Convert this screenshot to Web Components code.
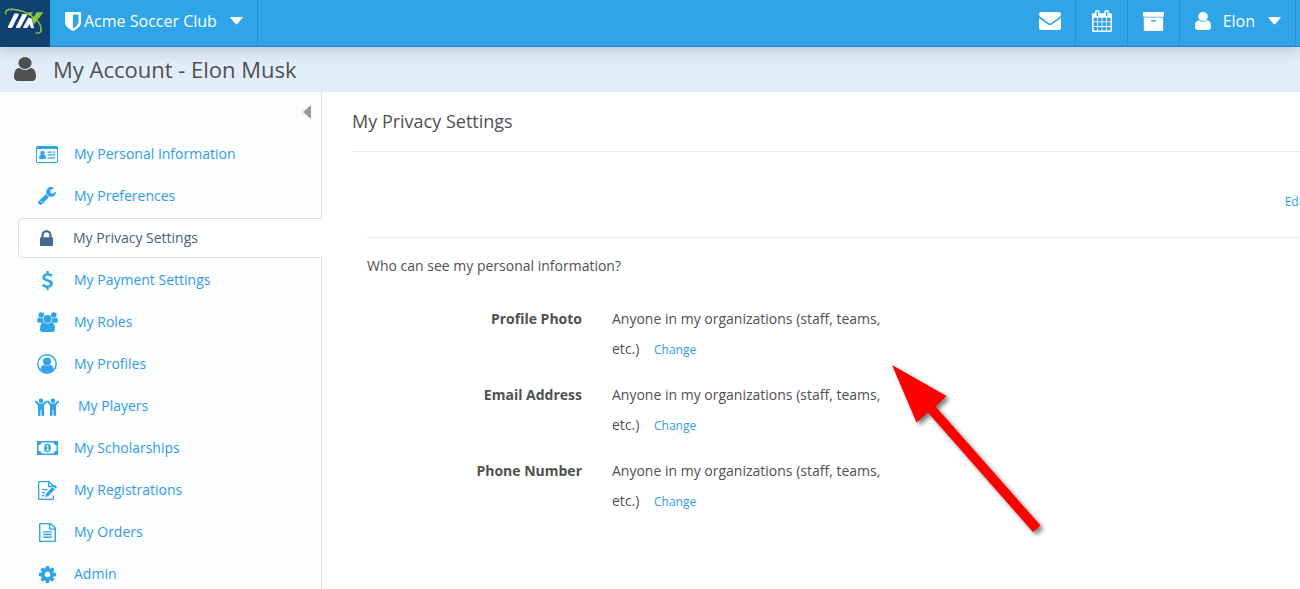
<!DOCTYPE html>
<html lang="en">
<head>
<meta charset="utf-8">
<meta name="viewport" content="width=device-width, initial-scale=1">
<title>My Account - Elon Musk</title>
<style>
  :root { --brand: #2fa4e7; --link: #2f9be6; --ink: #505050; --line: #d9dfe6; }
  html, body { margin: 0; height: 100%; }
  body { font-family: "Open Sans", sans-serif; font-size: 14px; color: var(--ink); background: #fff; overflow: hidden; }
</style>
</head>
<body>
<account-app></account-app>

<script>
const define = (name, html, setup) => {
  const template = document.createElement('template');
  template.innerHTML = html;
  customElements.define(name, class extends HTMLElement {
    constructor() {
      super();
      this.attachShadow({ mode: 'open' }).append(template.content.cloneNode(true));
    }
    connectedCallback() { if (setup) setup(this, this.shadowRoot); }
  });
};

/* Each icon: [width, height, viewBox, markup] */
const ICONS = {
  user: [16, 18, '256 128 1280 1536', '<path d="M1536 1399q0 109-62.5 187t-150.5 78h-854q-88 0-150.5-78t-62.5-187q0-85 8.5-160.5t31.5-152 58.5-131 94-89 134.5-34.5q131 128 313 128t313-128q76 0 134.5 34.5t94 89 58.5 131 31.5 152 8.5 160.5zm-256-887q0 159-112.5 271.5t-271.5 112.5-271.5-112.5-112.5-271.5 112.5-271.5 271.5-112.5 271.5 112.5 112.5 271.5z"/>'],
  envelope: [22, 18, '0 256 1792 1408', '<path d="M1792 710v794q0 66-47 113t-113 47h-1472q-66 0-113-47t-47-113v-794q44 49 101 87 362 246 497 345 57 42 92.5 65.5t94.5 48 110 24.5h2q51 0 110-24.5t94.5-48 92.5-65.5q170-123 498-345 57-39 100-87zm0-294q0 79-49 151t-122 123q-376 261-468 325-10 7-42.5 31t-54 38.5-52 32.5-57.5 27-50 9h-2q-23 0-50-9t-57.5-27-52-32.5-54-38.5-42.5-31q-91-64-262-182.5t-205-142.5q-62-42-117-115.5t-55-136.5q0-78 41.5-130t118.5-52h1472q65 0 112.5 47t47.5 113z"/>'],
  calendar: [20, 22, '64 0 1664 1792', '<path d="M192 1664h288v-288h-288v288zm352 0h320v-288h-320v288zm-352-352h288v-320h-288v320zm352 0h320v-320h-320v320zm-352-384h288v-288h-288v288zm736 736h320v-288h-320v288zm-384-736h320v-288h-320v288zm768 736h288v-288h-288v288zm-384-352h320v-320h-320v320zm-352-864v-288q0-13-9.5-22.5t-22.5-9.5h-64q-13 0-22.5 9.5t-9.5 22.5v288q0 13 9.5 22.5t22.5 9.5h64q13 0 22.5-9.5t9.5-22.5zm736 864h288v-320h-288v320zm-384-384h320v-288h-320v288zm384 0h288v-288h-288v288zm32-480v-288q0-13-9.5-22.5t-22.5-9.5h-64q-13 0-22.5 9.5t-9.5 22.5v288q0 13 9.5 22.5t22.5 9.5h64q13 0 22.5-9.5t9.5-22.5zm384-64v1280q0 52-38 90t-90 38h-1408q-52 0-90-38t-38-90v-1280q0-52 38-90t90-38h128v-96q0-66 47-113t113-47h64q66 0 113 47t47 113v96h384v-96q0-66 47-113t113-47h64q66 0 113 47t47 113v96h128q52 0 90 38t38 90z"/>'],
  archive: [21, 19, '64 128 1664 1536', '<path d="M1088 832q0-26-19-45t-45-19h-256q-26 0-45 19t-19 45 19 45 45 19h256q26 0 45-19t19-45zm576-192v960q0 26-19 45t-45 19h-1408q-26 0-45-19t-19-45v-960q0-26 19-45t45-19h1408q26 0 45 19t19 45zm64-448v256q0 26-19 45t-45 19h-1536q-26 0-45-19t-19-45v-256q0-26 19-45t45-19h1536q26 0 45 19t19 45z"/>'],
  shield: [16, 19, '256 128 1280 1536', '<path d="M1344 960v-640h-448v1137q119-63 213-137 235-184 235-360zm192-768v768q0 86-33.5 170.5t-83 150-118 127.5-126.5 103-121 77.5-89.5 49.5-42.5 20q-12 6-26 6t-26-6q-16-7-42.5-20t-89.5-49.5-121-77.5-126.5-103-118-127.5-83-150-33.5-170.5v-768q0-26 19-45t45-19h1152q26 0 45 19t19 45z"/>'],
  caret: [13, 8, '0 0 13 8', '<path d="M1 0h11q1.300 0 .5 1L7.300 7q-.8.900-1.600 0L.5 1Q-.3 0 1 0z"/>'],
  collapse: [8, 14, '0 0 8 14', '<path d="M8 0v14L0 7z"/>'],
  card: [22, 17, '0 0 22 17', '<path fill-rule="evenodd" d="M1.500 0h19Q22 0 22 1.500v14q0 1.500-1.500 1.500h-19Q0 17 0 15.500v-14Q0 0 1.500 0zM1 3v12.500q0 .5.5.5h19q.5 0 .5-.5V3z"/><circle cx="6.500" cy="7" r="2.200"/><path d="M3.200 13V11q0-2.500 2-2.500 1.300 1 2.600 0 2 0 2 2.500v2zM11.500 5.500h4v1.300h-4zM16.800 5.500h2.400v1.300h-2.400zM11.500 8.200h7.700v1.200h-7.700zM11.500 11.200h7.700v1.200h-7.700z"/>'],
  wrench: [18, 18, '85 128 1641 1643', '<path d="M448 1472q0-26-19-45t-45-19-45 19-19 45 19 45 45 19 45-19 19-45zm644-420l-682 682q-37 37-90 37-52 0-91-37l-106-108q-38-36-38-90 0-53 38-91l681-681q39 98 114.500 173.500t173.500 114.500zm634-435q0 39-23 106-47 134-164.500 217.500t-258.500 83.500q-185 0-316.500-131.500t-131.500-316.500 131.500-316.500 316.500-131.500q58 0 121.500 16.500t107.500 46.500q16 11 16 28t-16 28l-293 169v224l193 107q5-3 79-48.500t135.500-81 70.500-35.500q15 0 23.500 10t8.500 25z"/>'],
  lock: [13, 16, '320 128 1152 1408', '<path d="M640 768h512v-192q0-106-75-181t-181-75-181 75-75 181v192zm832 96v576q0 40-28 68t-68 28h-960q-40 0-68-28t-28-68v-576q0-40 28-68t68-28h32v-192q0-184 132-316t316-132 316 132 132 316v192h32q40 0 68 28t28 68z"/>'],
  dollar: [11, 19, '430 0 935 1792', '<path d="M1362 1185q0 153-99.500 263.500t-258.500 136.500v175q0 14-9 23t-23 9h-135q-13 0-22.500-9.500t-9.500-22.500v-175q-66-9-127.500-31t-101.500-44.500-74-48-46.500-37.500-17.500-18q-17-21-2-41l103-135q7-10 23-12 15-2 24 9l2 2q113 99 243 125 37 8 74 8 81 0 142.500-43t61.500-122q0-28-15-53t-33.500-42-58.500-37.500-66-32-80-32.500q-39-16-61.500-25t-61.500-26.500-62.500-31-56.500-35.500-53.500-42.500-43.500-49-35.500-58-21-66.500-8.500-78q0-138 98-242t255-134v-180q0-13 9.500-22.500t22.500-9.500h135q14 0 23 9t9 23v176q57 6 110.500 23t87 33.500 63.500 37.500 39 29 15 14q17 18 5 38l-81 146q-8 15-23 16-14 3-27-7-3-3-14.500-12t-39-26.500-58.500-32-74.500-26-85.500-11.500q-95 0-155 43t-60 111q0 26 8.500 48t29.500 41.500 39.500 33 56 31 60.500 27 70 27.500q53 20 81 31.500t76 35 75.500 42.500 62 50 53 63.500 31.500 76.500 13 94z"/>'],
  users: [21, 20, '0 0 21 20', '<circle cx="4.200" cy="3" r="2.800"/><circle cx="16.800" cy="3" r="2.800"/><path d="M.2 9.500Q0 5.500 1.800 5.500q2.400 1.700 4.300.6-.7 2.500.9 4.700H2Q.2 10.800.2 9.500zM20.800 9.500q.2-4-1.600-4-2.400 1.700-4.300.6.7 2.500-.9 4.700h5q1.800 0 1.800-1.300z"/><circle cx="10.500" cy="7" r="4"/><path d="M3 17q0-6.500 4-6.500 3.500 2.300 7 0 4 0 4 6.500 0 3-2.600 3H5.600Q3 20 3 17z"/>'],
  profile: [20, 20, '0 0 20 20', '<circle cx="10" cy="10" r="9.200" fill="none" stroke="currentColor" stroke-width="1.400"/><circle cx="10" cy="7.600" r="4"/><path d="M3.300 16q.5-5 3.700-5 3 2 6 0 3.200 0 3.700 5Q14 18.700 10 18.700T3.300 16z"/>'],
  players: [24, 20, '0 -2 24 20', '<g><circle cx="6" cy="2.700" r="2.300"/><path d="M.2 2.900q.7-.8 1.400 0L4.300 5.500h3.400l2.700-2.600q.7-.6 1.400 0 .6.700 0 1.300L9 7.500V17.200q0 .8-1.200.8t-1.300-.8V12h-1v5.200q0 .8-1.300.8T3 17.200V7.500L.2 4.200q-.5-.6 0-1.300z"/></g><g transform="translate(12 0)"><circle cx="6" cy="2.700" r="2.300"/><path d="M.2 2.900q.7-.8 1.400 0L4.300 5.500h3.400l2.700-2.600q.7-.6 1.400 0 .6.700 0 1.300L9 7.500V17.200q0 .8-1.200.8t-1.300-.8V12h-1v5.200q0 .8-1.300.8T3 17.200V7.500L.2 4.200q-.5-.6 0-1.300z"/></g>'],
  money: [21, 14, '0 0 21 14', '<path fill-rule="evenodd" d="M0 0h21v14H0zM4.500 1.500Q4.300 4 1.500 4.300v5.400Q4.300 10 4.500 12.500h12q.2-2.500 3-2.800V4.300q-2.800-.3-3-2.800z"/><ellipse cx="10.500" cy="7" rx="3.500" ry="4.300"/><path fill="#fcfdff" d="M9.100 4.900 10.300 3.900h1v4.900h1.100v1H9v-1h1.200V5.300l-.7.500z"/>'],
  edit: [19, 19, '0 0 19 19', '<path fill="none" stroke="currentColor" stroke-width="1.300" d="M15.400 5.500V5L11 .7H1.300Q.7.700.7 1.300v16.400q0 .6.600.6h13.500q.6 0 .6-.6V14.500M10.600.7v4.800h4"/><path d="M16.300 4.200q.5-.5 1.100 0l1.200 1.200q.6.600 0 1.200l-1.200 1.100-2.300-2.300zM14.400 6.100l2.300 2.300-6.500 6.500-3.300 1.300 1-3.500z"/><path d="M4 8h5.500v1.200H4zM4 11h3v1.200H4zM4 14h2v1.200H4z"/>'],
  file: [17, 19, '128 0 1536 1792', '<path d="M1596 380q28 28 48 76t20 88v1152q0 40-28 68t-68 28h-1344q-40 0-68-28t-28-68v-1600q0-40 28-68t68-28h896q40 0 88 20t76 48zm-444-244v376h376q-10-29-22-41l-313-313q-12-12-41-22zm384 1528v-1024h-416q-40 0-68-28t-28-68v-416h-768v1536h1280zm-1024-864q0-14 9-23t23-9h704q14 0 23 9t9 23v64q0 14-9 23t-23 9h-704q-14 0-23-9t-9-23v-64zm736 224q14 0 23 9t9 23v64q0 14-9 23t-23 9h-704q-14 0-23-9t-9-23v-64q0-14 9-23t23-9h704zm0 256q14 0 23 9t9 23v64q0 14-9 23t-23 9h-704q-14 0-23-9t-9-23v-64q0-14 9-23t23-9h704z"/>'],
  cog: [17, 17, '128 128 1536 1536', '<path d="M1152 896q0-106-75-181t-181-75-181 75-75 181 75 181 181 75 181-75 75-181zm512-109v222q0 12-8 23t-20 13l-185 28q-19 54-39 91 35 50 107 138 10 12 10 25t-9 23q-27 37-99 108t-94 71q-12 0-26-9l-138-108q-44 23-91 38-16 136-29 186-7 28-36 28h-222q-14 0-24.500-8.500t-11.500-21.500l-28-184q-49-16-90-37l-141 107q-10 9-25 9-14 0-25-11-126-114-165-168-7-10-7-23 0-12 8-23 15-21 51-66.500t54-70.500q-27-50-41-99l-183-27q-13-2-21-12.500t-8-23.500v-222q0-12 8-23t19-13l186-28q14-46 39-92-40-57-107-138-10-12-10-24 0-10 9-23 26-36 98.500-107.500t94.500-71.500q13 0 26 10l138 107q44-23 91-38 16-136 29-186 7-28 36-28h222q14 0 24.500 8.500t11.500 21.500l28 184q49 16 90 37l142-107q9-9 24-9 13 0 25 10 129 119 165 170 7 8 7 22 0 12-8 23-15 21-51 66.500t-54 70.500q26 50 41 98l183 28q13 2 21 12.500t8 23.500z"/>']
};

define('ui-icon', `
  <style>
    :host { display: inline-flex; flex: none; }
    svg { display: block; fill: currentColor; }
  </style>
  <span></span>`, (host, root) => {
  const [w, h, box, body] = ICONS[host.getAttribute('name')];
  const k = Number(host.getAttribute('scale') || 1);
  root.querySelector('span').innerHTML =
    `<svg width="${Math.round(w * k)}" height="${Math.round(h * k)}" viewBox="${box}" preserveAspectRatio="none" aria-hidden="true">${body}</svg>`;
});

define('club-logo', `
  <style>
    :host { display: block; width: 50px; height: 47px; background: #11426f; }
    a, svg { display: block; }
  </style>
  <a href="#" aria-label="Home">
    <svg width="50" height="47" viewBox="0 0 50 47">
      <g fill="#fff">
        <path d="M14.500 13.500h3.800q.8.300.4 1.200L12.500 27q-.5 1-1.500 1H8.300q-.9-.3-.4-1.300z"/>
        <path d="M22.500 14h3.500q1.500.5 1 1.500L20.500 27q-.5 1-1.500 1h-2.500q-.9-.3-.4-1.300z"/>
        <path d="M28.500 17.500q3 .5 3.500 2L34 28q-3 .5-3.500-1l-1-3-1.700 3q-.5 1-1.500 1h-2.600q-.9-.3-.4-1.300z"/>
      </g>
      <path fill="#8bc53f" d="M28 12.300h5l-2 4-4.500-2zM36.500 12.300h7L34 24.500l-3-7.500 2.300.8z"/>
      <path fill="none" stroke="#8bc53f" stroke-width="1.400" d="M6 14.500Q4 9.300 12 9.300 24 10 34 17.500q9 7.500 6.700 14.500-1.500 1.500-5.200 1"/>
    </svg>
  </a>`);

define('top-item', `
  <style>
    :host { display: block; border-right: 1px solid #278fd0; }
    a, button { box-sizing: border-box; height: 46px; padding: 0 14px 4px 15px; border: 0; background: none; color: #fff; font: inherit; font-size: 16px; line-height: 24px; display: flex; align-items: center; justify-content: center; text-decoration: none; cursor: pointer; }
    a { min-width: 51px; }
  </style>
  <slot></slot>`, (host, root) => {
  if (root.querySelector('a,button')) return;
  const control = document.createElement(host.hasAttribute('menu') ? 'button' : 'a');
  if (control.localName === 'a') control.href = '#'; else control.type = 'button';
  if (host.hasAttribute('label')) control.setAttribute('aria-label', host.getAttribute('label'));
  control.append(document.createElement('slot'));
  root.querySelector('slot').replaceWith(control);
});

define('top-bar', `
  <style>
    :host { display: block; position: relative; background: var(--brand); box-shadow: 0 2px 14px rgba(70, 90, 110, .3); }
    nav { display: flex; border-bottom: 1px solid #1b86cb; }
    club-logo { margin-bottom: -1px; }
    .right { display: flex; margin-left: auto; padding-right: 4px; }
    .club { margin: 0 13px 0 3px; }
    .me { margin: 0 13px 0 12px; }
  </style>
  <nav>
    <club-logo></club-logo>
    <top-item menu><ui-icon name="shield"></ui-icon><span class="club">Acme Soccer Club</span><ui-icon name="caret"></ui-icon></top-item>
    <div class="right">
      <top-item label="Messages"><ui-icon name="envelope"></ui-icon></top-item>
      <top-item label="Calendar"><ui-icon name="calendar"></ui-icon></top-item>
      <top-item label="Archive"><ui-icon name="archive"></ui-icon></top-item>
      <top-item menu><ui-icon name="user"></ui-icon><span class="me">Elon</span><ui-icon name="caret"></ui-icon></top-item>
    </div>
  </nav>`);

define('page-title', `
  <style>
    :host { box-sizing: border-box; display: flex; align-items: center; gap: 17px; height: 45px; padding: 0 0 2px 14px; background: #e1edf9; }
    h1 { margin: 0; font-size: 22px; line-height: 30px; font-weight: 400; }
  </style>
  <ui-icon name="user" scale="1.35"></ui-icon><h1><slot></slot></h1>`);

define('menu-item', `
  <style>
    :host { display: block; margin-bottom: 2px; }
    a { box-sizing: border-box; display: flex; align-items: center; height: 40px; border: 1px solid transparent; border-right: 0; border-radius: 5px 0 0 5px; padding-left: 15px; color: var(--link); text-decoration: none; line-height: 20px; }
    .icon { display: flex; justify-content: center; width: 26px; margin-right: 14px; color: var(--brand); }
    :host([active]) { margin-right: -1px; }
    :host([active]) a { background: #fff; border-color: var(--line); color: #466180; }
    :host([active]) .icon { color: #436a91; width: 24px; margin-right: 15px; }
    :host([wide]) .icon { margin-right: 18px; }
  </style>
  <a href="#"><span class="icon"></span><span><slot></slot></span></a>`, (host, root) => {
  const icon = document.createElement('ui-icon');
  icon.setAttribute('name', host.getAttribute('icon'));
  root.querySelector('.icon').replaceChildren(icon);
  if (host.hasAttribute('active')) root.querySelector('a').setAttribute('aria-current', 'page');
});

define('side-menu', `
  <style>
    :host { display: block; box-sizing: border-box; width: 322px; flex: none; background: #fcfdff; border-right: 1px solid var(--line); }
    button { display: block; margin: 13px 10px 15px auto; padding: 0; border: 0; background: none; color: #999; height: 14px; cursor: pointer; }
    nav { padding-left: 18px; }
  </style>
  <button type="button" aria-label="Collapse menu"><ui-icon name="collapse"></ui-icon></button>
  <nav><slot></slot></nav>`);

define('privacy-row', `
  <style>
    :host { display: grid; grid-template-columns: 215px 285px; column-gap: 30px; line-height: 30px; margin-bottom: 16px; }
    .label { text-align: right; font-weight: 700; }
    a { margin-left: 11px; font-size: 12px; color: var(--link); text-decoration: none; line-height: 20px; }
  </style>
  <span class="label" id="label"></span>
  <span><slot></slot> <a href="#">Change</a></span>`, (host, root) => {
  root.querySelector('.label').textContent = host.getAttribute('label');
});

define('privacy-settings', `
  <style>
    :host { display: block; flex: 1; min-width: 0; padding-left: 30px; overflow: hidden; }
    h2 { margin: 0; padding: 17px 0 18px; font-size: 18px; line-height: 24px; font-weight: 400; border-bottom: 1px solid #ebebeb; }
    section { margin: 0 -23px 0 15px; }
    .actions { display: flex; justify-content: flex-end; padding: 40px 17px 25px 0; border-bottom: 1px solid #ebebeb; font-size: 12px; line-height: 20px; }
    .actions a { color: var(--link); text-decoration: none; }
    p { margin: 18px 0 28px; line-height: 20px; }
  </style>
  <h2>My Privacy Settings</h2>
  <section>
    <div class="actions"><a href="#">Edit</a></div>
    <p>Who can see my personal information?</p>
    <privacy-row label="Profile Photo">Anyone in my organizations (staff, teams, etc.)</privacy-row>
    <privacy-row label="Email Address">Anyone in my organizations (staff, teams, etc.)</privacy-row>
    <privacy-row label="Phone Number">Anyone in my organizations (staff, teams, etc.)</privacy-row>
  </section>`);

define('pointer-arrow', `
  <style>
    :host { position: absolute; left: 892px; top: 365px; pointer-events: none; }
    svg { display: block; overflow: visible; filter: drop-shadow(3px 3px 2px rgba(0, 0, 0, .5)); }
  </style>
  <svg width="149" height="168" viewBox="0 0 149 168" aria-hidden="true">
    <path fill="#f00" d="M0 0 54.500 31 43.500 41.500 148.500 160.500 141 167 36 47.500 24.500 57.500z"/>
  </svg>`);

define('account-app', `
  <style>
    :host { display: flex; flex-direction: column; min-height: 100%; height: 100vh; }
    top-bar { z-index: 1; }
    .body { display: flex; flex: 1; min-height: 0; }
  </style>
  <top-bar></top-bar>
  <page-title>My Account - Elon Musk</page-title>
  <div class="body">
    <side-menu>
      <menu-item icon="card">My Personal Information</menu-item>
      <menu-item icon="wrench">My Preferences</menu-item>
      <menu-item icon="lock" active>My Privacy Settings</menu-item>
      <menu-item icon="dollar">My Payment Settings</menu-item>
      <menu-item icon="users">My Roles</menu-item>
      <menu-item icon="profile">My Profiles</menu-item>
      <menu-item icon="players" wide>My Players</menu-item>
      <menu-item icon="money">My Scholarships</menu-item>
      <menu-item icon="edit">My Registrations</menu-item>
      <menu-item icon="file">My Orders</menu-item>
      <menu-item icon="cog">Admin</menu-item>
    </side-menu>
    <privacy-settings></privacy-settings>
  </div>
  <pointer-arrow></pointer-arrow>`);
</script>
</body>
</html>
